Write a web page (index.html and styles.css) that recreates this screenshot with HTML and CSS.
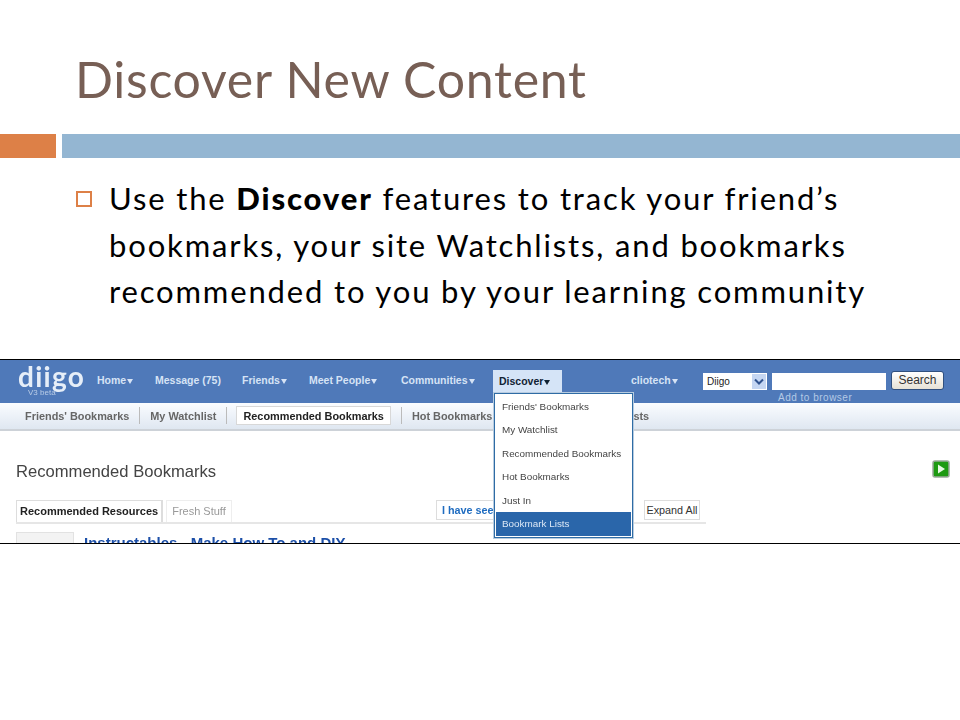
FILE: index.html
```html
<!DOCTYPE html>
<html lang="en">
<head>
<meta charset="utf-8">
<title>Discover New Content</title>
<link rel="stylesheet" href="styles.css">
</head>
<body>
<main class="slide">
  <h1 class="title">Discover New Content</h1>
  <div class="rule"><span class="rule-a"></span><span class="rule-b"></span></div>
  <div class="point">
    <span class="box"></span>
    <p class="point-text">Use the <b>Discover</b> features to track your friend’s<br>bookmarks, your site Watchlists, and bookmarks<br>recommended to you by your learning community</p>
  </div>
  <section class="shot">
    <div class="nav">
      <div class="logo">diigo<small>V3 beta</small></div>
      <ul class="nav-links">
        <li class="w-home">Home<i class="caret"></i></li>
        <li class="w-msg">Message (75)</li>
        <li class="w-fr">Friends<i class="caret"></i></li>
        <li class="w-meet">Meet People<i class="caret"></i></li>
        <li class="w-comm">Communities<i class="caret"></i></li>
        <li class="active">Discover<i class="caret"></i></li>
        <li class="user">cliotech<i class="caret"></i></li>
      </ul>
      <div class="search">
        <div class="select"><span>Diigo</span><i class="select-arrow"><svg width="10" height="7" viewBox="0 0 10 7"><path d="M1 1.5 5 5.5 9 1.5" fill="none" stroke="#31538f" stroke-width="2"/></svg></i></div>
        <div class="field-wrap"><div class="field"></div><div class="add">Add to browser</div></div>
        <div class="search-btn">Search</div>
      </div>
    </div>
    <div class="subnav">
      <span class="sub">Friends' Bookmarks</span><i class="sep"></i>
      <span class="sub">My Watchlist</span><i class="sep"></i>
      <span class="sub current">Recommended Bookmarks</span><i class="sep"></i>
      <span class="sub">Hot Bookmarks</span>
      <span class="sub tail">sts</span>
    </div>
    <div class="content">
      <div class="head-row">
        <h2 class="page-title">Recommended Bookmarks</h2>
        <svg class="play" width="18" height="18" viewBox="0 0 18 18"><rect x="1" y="1" width="16" height="16" rx="2" fill="#1e9a12" stroke="#9aa89a" stroke-width="1.5"/><path d="M6 4.5 13 9 6 13.5Z" fill="#e8f8e4"/></svg>
      </div>
      <div class="tabs">
        <span class="tab on">Recommended Resources</span>
        <span class="tab">Fresh Stuff</span>
        <span class="seen">I have seen</span>
        <span class="expand">Expand All</span>
      </div>
      <div class="item">
        <span class="thumb"></span>
        <span class="item-title">Instructables - Make How To and DIY</span>
      </div>
    </div>
    <ul class="menu">
      <li>Friends' Bookmarks</li>
      <li>My Watchlist</li>
      <li>Recommended Bookmarks</li>
      <li>Hot Bookmarks</li>
      <li>Just In</li>
      <li class="hl">Bookmark Lists</li>
    </ul>
  </section>
</main>
</body>
</html>
```
FILE: styles.css
```css
* { box-sizing: border-box; }
html, body { margin: 0; padding: 0; background: #fff; }
ul { list-style: none; margin: 0; padding: 0; }
.slide { width: 960px; height: 720px; overflow: hidden; padding-top: 49px; font-family: "Lato", "Liberation Sans", sans-serif; }
.title { margin: 0 0 0 75px; font-size: 50px; line-height: 60px; font-weight: 400; color: #775f55; letter-spacing: .75px; white-space: nowrap; }
.rule { display: flex; gap: 6px; height: 24px; margin-top: 25px; }
.rule-a { width: 56px; background: #dd8047; }
.rule-b { flex: 1; background: #94b6d2; }
.point { display: flex; margin-top: 17px; padding-left: 76px; }
.box { width: 16px; height: 16px; margin-top: 16px; border: 2px solid #dd8047; flex: none; }
.point-text { margin: 0 0 0 17px; font-size: 31px; line-height: 46.5px; color: #000; letter-spacing: 1.85px; white-space: nowrap; }
.point-text b { font-weight: 900; }

.shot { position: relative; margin-top: 44px; height: 185px; border-top: 1px solid #000; border-bottom: 1px solid #000; overflow: hidden; font-family: "Liberation Sans", Arial, sans-serif; font-size: 11px; background: #fff; }
.nav, .subnav, .content, .menu { filter: blur(.3px); }
.nav { display: flex; height: 43px; background: #4f79b9; color: #d6e3f5; }
.logo { position: relative; width: 97px; padding-left: 18px; font-size: 28px; font-weight: 700; line-height: 32px; letter-spacing: 1.3px; color: #e6eef8; font-family: "Lato", sans-serif; }
.logo small { position: absolute; left: 28px; top: 28px; font-size: 8px; font-weight: 400; line-height: 10px; letter-spacing: 0; color: #b9cce6; font-family: "Liberation Sans", sans-serif; }
.nav-links { display: flex; align-items: flex-start; font-weight: 700; font-size: 10.5px; }
.nav-links li { line-height: 41px; height: 33px; white-space: nowrap; }
.caret { display: inline-block; margin-left: 1px; border-style: solid; border-width: 5px 3.5px 0; border-color: currentColor transparent transparent; vertical-align: 0; }
.w-home { width: 58px; }
.w-msg { width: 87px; }
.w-fr { width: 67px; }
.w-meet { width: 92px; }
.w-comm { width: 92px; }
.nav-links .active { width: 69px; height: 34px; margin-top: 10px; padding-left: 6px; background: #d5e4f7; color: #123; line-height: 22px; }
.nav-links .user { width: 72px; margin-left: 69px; }
.search { display: flex; align-items: flex-start; }
.select { display: flex; align-items: center; justify-content: space-between; width: 64px; height: 17px; margin-top: 13px; padding: 0 1px 0 4px; background: #fff; color: #222; font-size: 10px; }
.select-arrow { display: flex; align-items: center; justify-content: center; width: 14px; height: 15px; background: #c5d6f2; }
.field-wrap { width: 114px; margin: 13px 0 0 5px; }
.field { height: 17px; background: #fff; }
.add { margin-top: 2px; padding-left: 6px; font-size: 10px; line-height: 11px; color: #b4c9e6; letter-spacing: .5px; white-space: nowrap; }
.search-btn { width: 53px; height: 19px; margin: 11px 0 0 5px; background: linear-gradient(#fff, #e6e2d6); border: 1px solid #30507f; border-radius: 3px; text-align: center; line-height: 16px; font-size: 12px; color: #333; }
.subnav { display: flex; align-items: center; height: 28px; padding: 0 0 0 25px; background: linear-gradient(#fafcff, #dfe7f1); border-bottom: 2px solid #cdd2d8; font-size: 10.9px; font-weight: 700; color: #666; white-space: nowrap; }
.sep { width: 1px; height: 17px; margin: 0 10px; background: #bbb; }
.current { height: 19px; margin-left: -1px; padding: 0 6px; line-height: 18px; background: #fff; border: 1px solid #d8d8d8; color: #222; }
.tail { margin-left: 141px; }
.content { padding: 0 16px; }
.head-row { display: flex; align-items: flex-start; justify-content: space-between; height: 69px; }
.page-title { margin: 31px 0 0; font-size: 16.6px; line-height: 20px; font-weight: 400; color: #444; }
.play { margin: 29px -6px 0 0; }
.tabs { position: relative; display: flex; align-items: flex-end; width: 690px; height: 24px; border-bottom: 2px solid #e6e6e6; }
.tab { padding: 0 5px; height: 22px; line-height: 20px; font-size: 11px; color: #999; border: 1px solid #eee; border-bottom: 0; margin-right: 0; }
.tab.on { padding: 0 3px; border-width: 1px 2px 0 1px; border-color: #ddd; color: #222; font-weight: 700; margin-right: 3px; }
.seen { position: absolute; left: 420px; top: 0; height: 20px; width: 70px; padding-left: 5px; line-height: 18px; background: #fff; border: 1px solid #ddd; color: #1f6cc0; font-weight: 700; font-size: 10.8px; white-space: nowrap; overflow: hidden; }
.expand { position: absolute; left: 628px; top: 0; height: 20px; width: 56px; text-align: center; line-height: 18px; background: #fff; border: 1px solid #ddd; color: #333; font-size: 10.8px; white-space: nowrap; }
.item { display: flex; margin-top: 8px; }
.thumb { width: 58px; height: 20px; background: #f3f3f3; border: 1px solid #e2e2e2; }
.item-title { margin: 3px 0 0 10px; font-size: 15px; line-height: 16px; font-weight: 700; color: #1c4fa8; text-decoration: underline; white-space: nowrap; }
.menu { position: absolute; left: 494px; top: 33px; width: 139px; height: 145px; padding: 1px 1px 0; background: #fff; border: 1px solid #2f6ca5; box-shadow: 0 0 0 1px #b8cce0; color: #444; font-size: 9.9px; }
.menu li { height: 23.6px; line-height: 24px; padding-left: 6px; white-space: nowrap; }
.menu .hl { background: #2a66aa; color: #dbe7f5; }
```
